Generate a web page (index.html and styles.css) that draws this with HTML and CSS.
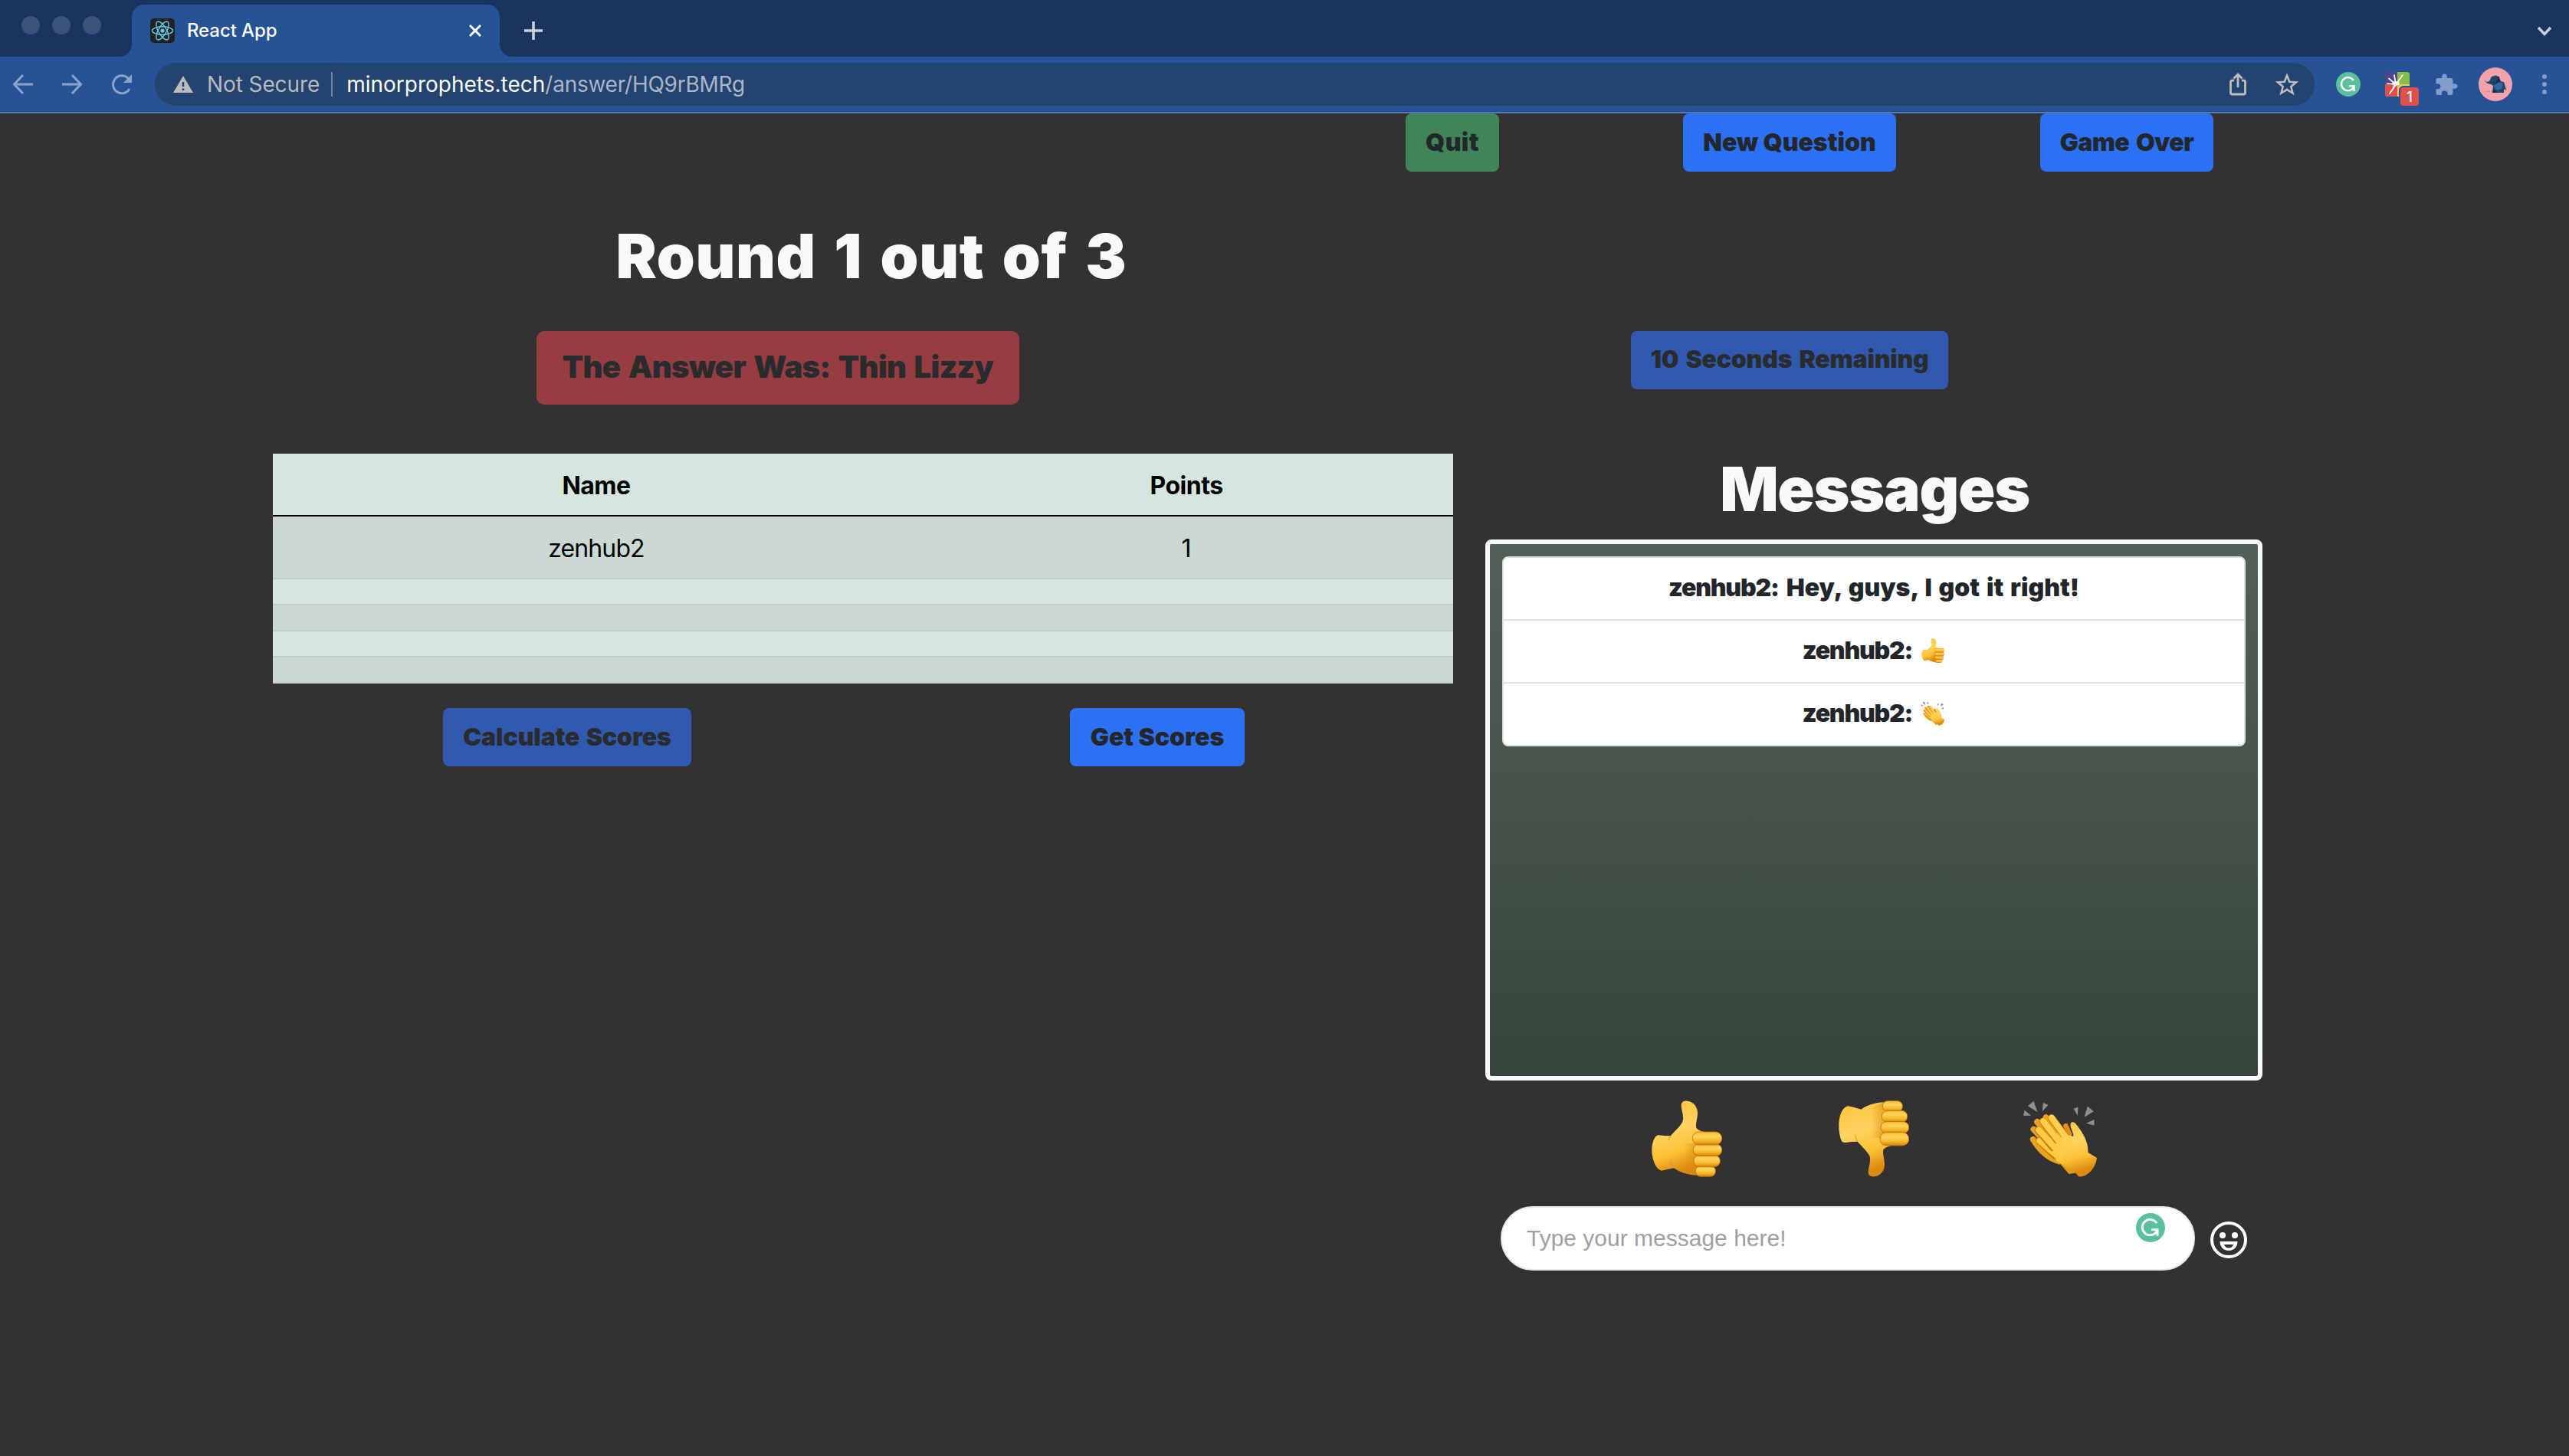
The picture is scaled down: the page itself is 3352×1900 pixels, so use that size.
FILE: index.html
```
<!DOCTYPE html>
<html lang="en">
<head>
<meta charset="utf-8">
<title>React App</title>
<link rel="stylesheet" href="styles.css">
</head>
<body>
<svg class="defs" width="0" height="0">
  <defs>
    <linearGradient id="skin" x1="0" y1="0" x2="0.25" y2="1"><stop offset="0" stop-color="#fcc536"/><stop offset=".45" stop-color="#ffd260"/><stop offset=".75" stop-color="#fcc234"/><stop offset="1" stop-color="#dc8a10"/></linearGradient>
    <linearGradient id="skin-flip" x1="0" y1="1" x2="0.25" y2="0"><stop offset="0" stop-color="#fcc536"/><stop offset=".45" stop-color="#ffd260"/><stop offset=".75" stop-color="#fcc234"/><stop offset="1" stop-color="#dc8a10"/></linearGradient>
    <linearGradient id="finger" x1="0" y1="0" x2="0" y2="1"><stop offset="0" stop-color="#f9bd2c"/><stop offset=".35" stop-color="#ffd35c"/><stop offset=".7" stop-color="#f7b725"/><stop offset="1" stop-color="#d07d0e"/></linearGradient>
    <linearGradient id="shade" x1="0" y1="0" x2="1" y2="0"><stop offset="0" stop-color="#d98a08" stop-opacity="0"/><stop offset="1" stop-color="#d98a08" stop-opacity=".6"/></linearGradient>
    <symbol id="thumb-up" viewBox="46 32 276 300">
      <path fill="url(#skin)" d="M73 168Q96 171 120 171C137 151 163 129 168 112C173 90 161 66 162 50C163 37 174 33 185 34C212 36 227 60 226 84C225 106 217 125 221 139Q228 150 254 155L262 326Q175 329 134 297Q105 302 84 307C52 298 34 218 58 179Q65 168 73 168Z"/>
      <path fill="url(#shade)" d="M172 200H222V324Q190 316 172 300Z"/>
      <path fill="none" stroke="#d8961b" stroke-width="3" d="M114 187Q116 177 120 171M120 265Q122 285 134 297"/>
      <g fill="url(#finger)" stroke="#bd700c" stroke-width="2.5">
        <rect x="218" y="288" width="78" height="42" rx="20"/><rect x="211" y="246" width="103" height="46" rx="22"/><rect x="209" y="203" width="112" height="46" rx="22"/><rect x="206" y="155" width="115" height="51" rx="25"/>
      </g>
    </symbol>
    <symbol id="thumb-down" viewBox="46 32 276 300">
      <g transform="matrix(1 0 0 -1 0 364)">
      <path fill="url(#skin-flip)" d="M78 168Q96 171 120 171C137 151 163 129 168 112C173 90 161 66 162 50C163 37 174 33 185 34C212 36 227 60 226 84C225 106 217 125 221 139Q228 150 254 155L262 326Q175 329 134 297Q105 306 82 310C44 300 38 218 58 172Q65 164 78 168Z"/>
      <path fill="url(#shade)" d="M172 185H222V324Q190 316 172 300Z"/>
      <path fill="none" stroke="#d8961b" stroke-width="3" d="M111 198Q114 180 120 171"/>
      </g>
      <g fill="url(#finger)" stroke="#bd700c" stroke-width="2.5">
        <rect x="218" y="34" width="78" height="42" rx="20"/><rect x="215" y="72" width="100" height="46" rx="22"/><rect x="212" y="115" width="109" height="46" rx="22"/><rect x="208" y="157" width="113" height="52" rx="25"/>
      </g>
    </symbol>
    <symbol id="clap" viewBox="0 138 290 300">
      <path class="spark" d="M40 140L17 160L55 184ZM4 176L0 198L30 197ZM77 147L97 156L74 181ZM196 170L214 164L212 197ZM251 161L275 181L238 204ZM277 213V236L246 227Z"/>
      <path fill="#e39a18" d="M140 382L178 426L202 422L210 380Z"/>
      <path fill="none" stroke="#e8a31f" stroke-width="24" stroke-linecap="round" d="M88 205L150 270M54 222L140 320M40 251L130 350M38 291Q80 360 140 376"/>
      <path fill="none" stroke="#dc9015" stroke-width="20" stroke-linecap="round" d="M166 238L180 270"/>
      <path fill="url(#skin)" d="M100 260L196 278C194 258 180 240 185 228C190 218 202 224 210 236C236 270 254 300 253 342L287 362C288 392 255 440 216 436C200 410 150 395 118 364Z"/>
      <g fill="none" stroke-linecap="round">
        <path stroke="#c97f10" stroke-width="29" d="M62 296L125 355"/><path stroke="#ffc93e" stroke-width="24" d="M63 296L140 362"/>
        <path stroke="#c97f10" stroke-width="29" d="M58 254L115 322"/><path stroke="#ffcb45" stroke-width="24" d="M60 254L145 348"/>
        <path stroke="#c97f10" stroke-width="29" d="M76 221L132 293"/><path stroke="#ffcd4b" stroke-width="24" d="M77 220L160 325"/>
        <path stroke="#c97f10" stroke-width="29" d="M110 207L157 270"/><path stroke="#ffcf50" stroke-width="24" d="M110 206L190 315"/>
      </g>
    </symbol>
    <symbol id="g-arrow" viewBox="0 0 32 32">
      <circle cx="16" cy="16" r="16" fill="#5abf9e"/>
      <path fill="none" stroke="#fff" stroke-width="2.5" d="M22.8 11A8.6 8.6 0 1 0 20.5 22.7L23.5 19.2M17 18.2H23.6V25"/>
    </symbol>
  </defs>
</svg>

<header class="browser">
  <div class="tabstrip">
    <div class="lights"><i></i><i></i><i></i></div>
    <div class="tab">
      <svg class="favicon" viewBox="0 0 32 32"><rect width="32" height="32" rx="5" fill="#222"/><g fill="none" stroke="#61cdea" stroke-width="1.4"><ellipse cx="16" cy="16" rx="13.5" ry="5.2"/><ellipse cx="16" cy="16" rx="13.5" ry="5.2" transform="rotate(60 16 16)"/><ellipse cx="16" cy="16" rx="13.5" ry="5.2" transform="rotate(120 16 16)"/></g><circle cx="16" cy="16" r="2.6" fill="#61cdea"/></svg>
      <span class="tab-title">React App</span>
      <svg class="close" viewBox="0 0 18 18"><path d="M2 2L16 16M16 2L2 16" stroke="#fff" stroke-width="3"/></svg>
    </div>
    <svg class="plus" viewBox="0 0 24 24"><path d="M12 0V24M0 12H24" stroke="#c9d0dc" stroke-width="3.6"/></svg>
    <svg class="chevron" viewBox="0 0 20 14"><path d="M2 2L10 10.5L18 2" fill="none" stroke="#c9d0dc" stroke-width="3.4"/></svg>
  </div>
  <div class="toolbar">
    <svg class="nav-icon back" viewBox="0 0 28 28"><path d="M27 14H3M14 2L2.5 14L14 26"/></svg>
    <svg class="nav-icon fwd" viewBox="0 0 28 28"><path d="M1 14H25M14 2L25.500 14L14 26"/></svg>
    <svg class="nav-icon reload" viewBox="0 0 28 28"><path d="M24 20A11.500 11.500 0 1 1 21.500 5.500L24 8"/><path class="solid" d="M27 1V12H16Z"/></svg>
    <div class="omnibox">
      <svg class="warn" viewBox="0 0 26 22"><path fill="#babcbd" d="M13 0L26 22H0Z"/><path d="M13 8V14M13 16.500V19" stroke="#24436f" stroke-width="2.6"/></svg>
      <span class="insecure">Not Secure</span>
      <i class="divider"></i>
      <span class="url">minorprophets.tech<span class="path">/answer/HQ9rBMRg</span></span>
      <svg class="share" viewBox="0 0 22 30"><path d="M6 10H3.500Q1.500 10 1.500 12V26Q1.500 28 3.500 28H18.500Q20.500 28 20.500 26V12Q20.500 10 18.500 10H16M11 19V3M5.500 7.500L11 2L16.500 7.500" fill="none" stroke="#bcbec0" stroke-width="2.8"/></svg>
      <svg class="star" viewBox="0 0 30 30"><path d="M15 3.500L18.300 11.700L27 12.300L20.300 18L22.500 26.500L15 21.800L7.500 26.500L9.700 18L3 12.300L11.700 11.700Z" fill="none" stroke="#bcbec0" stroke-width="2.6"/></svg>
    </div>
    <svg class="ext-g" viewBox="0 0 32 32"><use href="#g-arrow"/></svg>
    <div class="ext-burst">
      <svg viewBox="0 0 32 32"><path fill="#50448a" d="M3 0H16V16H0V3Q0 0 3 0Z"/><path fill="#85be4b" d="M16 0H29Q32 0 32 3V16H16Z"/><path fill="#e0504b" d="M0 16H16V32H3Q0 32 0 29Z"/><path fill="#f5c55b" d="M16 16H32V32H16Z"/><path d="M14 16L3 15M14 16L5 8.500M14 16L12 4M14 16L23 4M14 17L6 28" stroke="#fff" stroke-width="1.700" stroke-linecap="round"/><path fill="#fff" d="M9 14L13 12L18 12.500L19 16L13 18.500L9.500 22L11 17Z"/></svg>
      <span class="badge">1</span>
    </div>
    <svg class="puzzle" viewBox="0 0 29 29"><path fill="#829ccb" d="M3 6H8.500C7.500 2.500 9 .5 11.500 .5S15.500 2.500 14.500 6H20Q22.500 6 22.500 8.500V13.500C26 12.500 28.500 14 28.500 16.500S26 20.500 22.500 19.500V25.500Q22.500 28 20 28H15.500C16.500 24.500 14.500 22.500 11.500 22.500S7 24.500 8 28H3Q.5 28 .5 25.500V20C4 21 6.500 19.500 6.500 16.500S4 12.500 .5 13.500V8.500Q.5 6 3 6Z"/></svg>
    <svg class="avatar" viewBox="0 0 44 44"><circle cx="22" cy="22" r="22" fill="#f1a3a9"/><path d="M8 31.500H18" stroke="#d88f96"/><path fill="#1f466f" d="M8 16L10 19L14 18L17 12L22 10.500L27 12L28 18L33 19L35 25L36 30L33 28V33H18L19 24L16 22L12 21L9 19Z"/><path fill="#3267a0" d="M19 24L27 19L32 21L30 28L24 30Z"/><path fill="#17304f" d="M26 12L29 18L21 22L24 16ZM20 28L25 33H18Z"/></svg>
    <div class="menu"><i></i><i></i><i></i></div>
  </div>
</header>

<nav class="actions">
  <button class="btn green quit">Quit</button>
  <button class="btn blue new-question">New Question</button>
  <button class="btn blue game-over">Game Over</button>
</nav>

<main class="game">
  <section class="left">
    <h1 class="round">Round 1 out of 3</h1>
    <div class="answer">The Answer Was: Thin Lizzy</div>
    <table class="scores">
      <thead><tr><th>Name</th><th>Points</th></tr></thead>
      <tbody>
        <tr><td><span class="player">zenhub2</span></td><td>1</td></tr>
        <tr class="blank"><td></td><td></td></tr>
        <tr class="blank"><td></td><td></td></tr>
        <tr class="blank"><td></td><td></td></tr>
        <tr class="blank"><td></td><td></td></tr>
      </tbody>
    </table>
    <div class="score-actions">
      <button class="btn muted calculate">Calculate Scores</button>
      <button class="btn blue get-scores">Get Scores</button>
    </div>
  </section>
  <section class="right">
    <div class="btn muted timer">10 Seconds Remaining</div>
    <h1 class="messages-title">Messages</h1>
    <div class="chat">
      <ul class="messages">
        <li><span class="who">zenhub2:</span><span class="said">Hey, guys, I got it right!</span></li>
        <li><span class="who">zenhub2:</span><svg class="mini"><use href="#thumb-up"/></svg></li>
        <li><span class="who">zenhub2:</span><svg class="mini"><use href="#clap"/></svg></li>
      </ul>
    </div>
    <div class="reactions">
      <svg><use href="#thumb-up"/></svg>
      <svg><use href="#thumb-down"/></svg>
      <svg class="clap"><use href="#clap"/></svg>
    </div>
    <div class="composer">
      <div class="field"><span>Type your message here!</span><svg class="field-g" viewBox="0 0 32 32"><use href="#g-arrow"/></svg></div>
      <svg class="smiley" viewBox="0 0 48 48"><circle cx="24" cy="24" r="22" fill="none" stroke="#fff" stroke-width="4"/><circle cx="16" cy="18" r="4" fill="#fff"/><circle cx="32" cy="18" r="4" fill="#fff"/><path fill="#fff" fill-rule="evenodd" d="M12.500 26H35.500C35.500 33 31 38 24 38S12.500 33 12.500 26ZM18 30C19 33 21 34.500 24 34.500S29 33 30 30Z"/></svg>
    </div>
  </section>
</main>
</body>
</html>
```
FILE: styles.css
```
* { box-sizing: border-box; }
body { margin: 0; width: 3352px; height: 1900px; overflow: hidden; background: #343132; font-family: Inter, sans-serif; }
.defs { position: absolute; }
svg { display: block; flex: none; }
h1, ul { margin: 0; padding: 0; }

/* browser frame */
.browser { height: 148px; background: #265296; border-bottom: 2px solid #5279ae; }
.tabstrip { display: flex; height: 74px; background: #19355f; }
.lights { display: flex; gap: 16px; width: 172px; padding: 21px 0 0 28px; }
.lights i { width: 24px; height: 24px; border-radius: 50%; background: #3b5377; }
.tab { position: relative; display: flex; align-items: center; width: 480px; height: 68px; margin-top: 6px; padding-left: 24px; border-radius: 16px 16px 0 0; background: #265296; }
.tab::before, .tab::after { content: ""; position: absolute; bottom: 0; width: 16px; height: 16px; }
.tab::before { left: -16px; background: radial-gradient(circle at 0 0, transparent 15.500px, #265296 16px); }
.tab::after { right: -16px; background: radial-gradient(circle at 100% 0, transparent 15.500px, #265296 16px); }
.favicon { width: 32px; height: 32px; }
.tab-title { margin-left: 16px; padding-bottom: 1px; color: #fff; font-size: 24px; font-weight: 500; letter-spacing: -.1px; }
.close { width: 18px; height: 18px; margin: 0 23px 0 auto; }
.plus { width: 24px; height: 24px; margin: 28px 0 0 32px; }
.chevron { width: 20px; height: 14px; margin: 34px 22px 0 auto; }
.toolbar { display: flex; align-items: center; height: 72px; padding-left: 16px; }
.nav-icon { width: 28px; height: 28px; fill: none; stroke: #8ba3cb; stroke-width: 3; }
.nav-icon .solid { fill: #8ba3cb; stroke: none; }
.fwd { margin-left: 36px; }
.reload { margin-left: 37px; }
.omnibox { display: flex; align-items: center; width: 2818px; height: 56px; margin-left: 29px; padding: 0 21px 0 24px; border-radius: 28px; background: #24436f; font-size: 28px; }
.warn { width: 26px; height: 22px; }
.insecure { margin-left: 18px; color: #b8babc; letter-spacing: -.1px; }
.divider { width: 2px; height: 32px; margin: 0 18px 0 15px; background: #7186a4; }
.url { color: #fff; }
.path { color: #a9b5ca; letter-spacing: -.25px; }
.share { width: 22px; height: 30px; margin-left: auto; }
.star { width: 30px; height: 30px; margin-left: 38px; }
.ext-g { width: 32px; height: 32px; margin-left: 28px; }
.ext-burst { position: relative; width: 32px; height: 32px; margin-left: 32px; }
.badge { position: absolute; left: 18px; top: 18px; width: 28px; height: 28px; border: 2px solid #265296; border-radius: 6px; background: #e0504b; color: #fff; font-size: 19px; font-weight: 500; line-height: 25px; text-align: center; }
.puzzle { width: 29px; height: 29px; margin-left: 34px; }
.avatar { width: 44px; height: 44px; margin-left: 27px; }
.menu { display: grid; gap: 4px; margin-left: 39px; }
.menu i { width: 6px; height: 6px; border-radius: 50%; background: #829ccb; }

/* buttons */
.btn { flex: none; height: 76px; padding: 0; border: 0; border-radius: 8px; color: #22272b; font: 900 32px/72px Inter, sans-serif; text-align: center; white-space: nowrap; }
.blue { background: #2c70f4; }
.muted { background: #2f5ab0; color: #292b2d; }
.green { background: #418458; }
.actions { display: flex; height: 76px; padding-left: 1834px; }
.quit { width: 122px; letter-spacing: .4px; }
.new-question { width: 278px; margin-left: 240px; }
.game-over { width: 226px; margin-left: 188px; letter-spacing: -.6px; word-spacing: 3px; }

/* game */
.game { display: flex; gap: 42px; padding-left: 356px; }
.left { width: 1540px; padding-top: 62px; }
h1 { color: #f8f9fb; font-size: 80px; font-weight: 900; line-height: 96px; text-align: center; white-space: nowrap; }
.round { padding-left: 22px; letter-spacing: .6px; word-spacing: 7px; }
.answer { width: 630px; height: 96px; margin: 50px 0 64px 344px; border-radius: 10px; background: #963d42; color: #292b2d; font-size: 40px; font-weight: 900; line-height: 93px; text-align: center; letter-spacing: -.7px; word-spacing: 3px; white-space: nowrap; }
.scores { width: 1540px; border-collapse: separate; border-spacing: 0; table-layout: fixed; background: #d5e6de; color: #000; font-size: 32px; text-align: center; }
th, td { height: 82px; padding: 2px 0 0 74px; border-bottom: 2px solid #c0cfc8; }
th { border-color: #000; font-weight: 700; letter-spacing: -.5px; }
tbody tr:nth-child(odd) { background: #cbd9d2; }
.blank td { height: 34px; padding: 0; }
.player { letter-spacing: -.9px; }
.score-actions { display: flex; padding: 32px 0 0 222px; }
.calculate { width: 324px; letter-spacing: -.1px; word-spacing: 2px; }
.get-scores { width: 228px; margin-left: 494px; }

.right { width: 1014px; padding-top: 208px; }
.timer { width: 414px; margin-left: 190px; line-height: 74px; letter-spacing: -.2px; word-spacing: 3px; }
.messages-title { margin-top: 82px; padding-left: 2px; letter-spacing: -1.300px; }
.chat { height: 706px; margin-top: 18px; padding: 16px; border: 6px solid #f8f9fa; border-radius: 8px; background: linear-gradient(#536057, #36453a); }
.messages { list-style: none; border: 2px solid #dfdfdf; border-radius: 8px; background: #fff; color: #22252a; font-size: 32px; font-weight: 900; }
.messages li { display: flex; align-items: center; justify-content: center; height: 82px; padding-bottom: 3px; border-bottom: 2px solid #dfdfdf; white-space: nowrap; }
.messages li:last-child { height: 80px; border: 0; }
.who { letter-spacing: -1.200px; }
.said { margin-left: 10px; letter-spacing: 0; word-spacing: 2.500px; }
.mini { width: 32px; height: 32px; margin-left: 11px; }
.spark { fill: #8e8e8e; }
.mini .spark { fill: #555; }
.reactions { display: flex; padding: 26px 0 0 217px; }
.reactions svg { width: 92px; height: 100px; margin-right: 152px; }
.reactions .clap { width: 97px; margin: 0 0 0 -3px; }
.composer { display: flex; align-items: center; padding: 38px 0 0 20px; }
.field { display: flex; justify-content: space-between; width: 906px; height: 84px; padding: 0 37px 0 32px; border: 2px solid #eaeaea; border-radius: 42px; background: #fff; color: #a0a0a0; font: 30px/80px "Liberation Sans", sans-serif; }
.field-g { width: 38px; height: 38px; margin-top: 7px; }
.smiley { width: 48px; height: 48px; margin: 4px 0 0 20px; }
```
